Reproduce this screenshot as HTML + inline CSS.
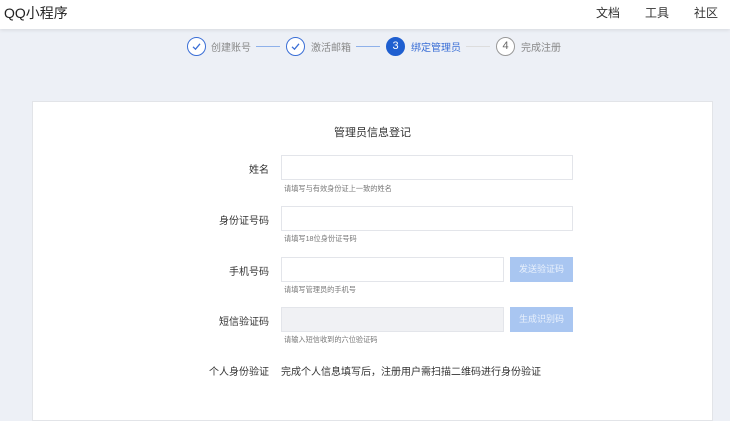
<!DOCTYPE html>
<html><head><meta charset="utf-8"><style>
*{margin:0;padding:0;box-sizing:border-box}
body{width:730px;height:410px;overflow:hidden;background:#edf0f6;font-family:"Liberation Sans","Noto Sans CJK SC",sans-serif;color:#333;position:relative}
.hd{position:absolute;left:0;top:0;width:730px;height:29px;background:#fff;box-shadow:0 1px 4px rgba(0,0,0,.1)}
.abs{position:absolute;white-space:nowrap}
.logo{left:4px;top:3px;font-size:14px;color:#222}
.nav{top:4px;font-size:12px;color:#333}
.c{position:absolute;width:19px;height:19px;border-radius:50%;top:37px;font-size:11px;text-align:center;line-height:17px}
.ck{border:1px solid #3b6fd6;background:#fff}
.ck svg{position:absolute;left:4px;top:4px}
.st{top:39px;font-size:10px;color:#888}
.ln{position:absolute;top:46px;height:1px}
.card{position:absolute;left:32px;top:101px;width:681px;height:320px;background:#fff;border:1px solid #e2e4e8}
.lb{font-size:10px;color:#333;text-align:right;width:100px;left:169px}
.in{position:absolute;left:281px;width:292px;height:25px;border:1px solid #e3e5ea;background:#fff}
.hint{left:284px;font-size:7.2px;color:#777}
.btn{position:absolute;left:510px;width:63px;height:25px;background:#a9c6f1;color:#e8f0fc;font-size:9px;text-align:center;line-height:25px}
</style></head><body>
<div class="hd"></div>
<div class="abs logo">QQ小程序</div>
<div class="abs nav" style="left:596px">文档</div>
<div class="abs nav" style="left:645px">工具</div>
<div class="abs nav" style="left:694px">社区</div>

<div class="c ck" style="left:187px"><svg width="9" height="9" viewBox="0 0 9 9"><path d="M1 4.8L3.5 7.2L8 1.8" fill="none" stroke="#3b6fd6" stroke-width="1.3"/></svg></div>
<div class="abs st" style="left:211px">创建账号</div>
<div class="ln" style="left:256px;width:24px;background:#8fb1ea"></div>
<div class="c ck" style="left:286px"><svg width="9" height="9" viewBox="0 0 9 9"><path d="M1 4.8L3.5 7.2L8 1.8" fill="none" stroke="#3b6fd6" stroke-width="1.3"/></svg></div>
<div class="abs st" style="left:311px">激活邮箱</div>
<div class="ln" style="left:356px;width:24px;background:#8fb1ea"></div>
<div class="c" style="left:386px;background:#1f5fd0;color:#fff;border:1px solid #1f5fd0">3</div>
<div class="abs st" style="left:411px;color:#3b6fd6">绑定管理员</div>
<div class="ln" style="left:466px;width:24px;background:#ddd"></div>
<div class="c" style="left:496px;border:1px solid #999;color:#666;background:#fff">4</div>
<div class="abs st" style="left:521px">完成注册</div>

<div class="card"></div>
<div class="abs" style="left:334px;top:124px;font-size:11px;color:#333">管理员信息登记</div>

<div class="abs lb" style="top:161px">姓名</div>
<div class="in" style="top:155px"></div>
<div class="abs hint" style="top:184px">请填写与有效身份证上一致的姓名</div>

<div class="abs lb" style="top:212px">身份证号码</div>
<div class="in" style="top:206px"></div>
<div class="abs hint" style="top:234px">请填写18位身份证号码</div>

<div class="abs lb" style="top:263px">手机号码</div>
<div class="in" style="top:257px;width:223px"></div>
<div class="btn" style="top:257px">发送验证码</div>
<div class="abs hint" style="top:285px">请填写管理员的手机号</div>

<div class="abs lb" style="top:313px">短信验证码</div>
<div class="in" style="top:307px;width:223px;background:#f0f1f4"></div>
<div class="btn" style="top:307px">生成识别码</div>
<div class="abs hint" style="top:335px">请输入短信收到的六位验证码</div>

<div class="abs lb" style="top:363px">个人身份验证</div>
<div class="abs" style="left:281px;top:363px;font-size:10px;color:#333">完成个人信息填写后，注册用户需扫描二维码进行身份验证</div>
</body></html>
